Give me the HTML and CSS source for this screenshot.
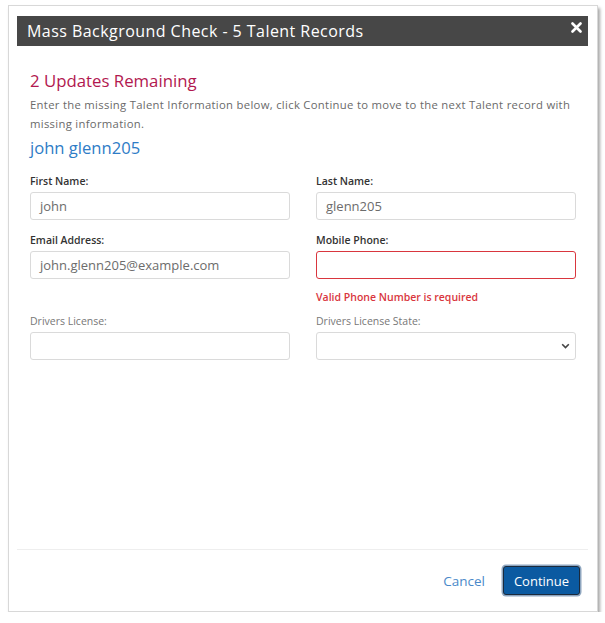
FILE: index.html
```html
<!DOCTYPE html>
<html>
<head>
<meta charset="utf-8">
<link rel="stylesheet" href="styles.css">
</head>
<body>
<div class="modal">
  <div class="header">
    <span class="header-title">Mass Background Check - 5 Talent Records</span>
    <svg class="close" width="11" height="11" viewBox="0 0 11 11"><path d="M1.5 1.5 L9.5 9.5 M9.5 1.5 L1.5 9.5" stroke="#fff" stroke-width="2.6" stroke-linecap="round"/></svg>
  </div>
  <div class="content">
    <h2 class="remaining">2 Updates Remaining</h2>
    <p class="intro">Enter the missing Talent Information below, click Continue to move to the next Talent record with missing information.</p>
    <h3 class="talent-name">john glenn205</h3>
    <div class="form-grid">
      <div class="field">
        <label class="label strong">First Name:</label>
        <div class="input">john</div>
      </div>
      <div class="field">
        <label class="label strong">Last Name:</label>
        <div class="input">glenn205</div>
      </div>
      <div class="field">
        <label class="label strong">Email Address:</label>
        <div class="input">john.glenn205@example.com</div>
      </div>
      <div class="field">
        <label class="label strong">Mobile Phone:</label>
        <div class="input invalid"></div>
        <div class="error">Valid Phone Number is required</div>
      </div>
      <div class="field">
        <label class="label">Drivers License:</label>
        <div class="input"></div>
      </div>
      <div class="field">
        <label class="label">Drivers License State:</label>
        <div class="input select">
          <svg class="chevron" width="9" height="6" viewBox="0 0 9 6"><path d="M1.2 1.2 L4.5 4.5 L7.8 1.2" fill="none" stroke="#444" stroke-width="1.6"/></svg>
        </div>
      </div>
    </div>
  </div>
  <div class="footer">
    <span class="cancel">Cancel</span>
    <span class="continue">Continue</span>
  </div>
</div>
</body>
</html>
```
FILE: styles.css
```css
html, body {
  margin: 0;
  padding: 0;
  background: #ffffff;
}
body {
  font-family: "Open Sans", "DejaVu Sans", sans-serif;
}
.modal {
  box-sizing: border-box;
  margin: 5px 0 0 8px;
  width: 590px;
  height: 607px;
  background: #fff;
  border: 1px solid #d8d8d8;
  box-shadow: 2px 3px 3px rgba(0, 0, 0, 0.35);
  padding: 10px 9px 0 8px;
  display: flex;
  flex-direction: column;
}
.header {
  height: 30px;
  background: #474747;
  color: #fff;
  display: flex;
  align-items: center;
  justify-content: space-between;
  padding: 0 10px 0 10px;
  flex: none;
}
.header-title {
  font-size: 16px;
  letter-spacing: 0.45px;
}
.close {
  margin-top: -8px;
  margin-right: -4px;
}
.content {
  flex: 1;
  padding: 0 12px 0 13px;
}
.remaining {
  margin: 25px 0 0 0;
  font-size: 16.8px;
  font-weight: 500;
  line-height: 20px;
  color: #b2184f;
}
.intro {
  margin: 4px 0 0 0;
  font-size: 11.3px;
  letter-spacing: 0.3px;
  line-height: 19px;
  color: #6a6a6a;
}
.talent-name {
  margin: 5px 0 0 0;
  font-size: 16.6px;
  font-weight: 400;
  line-height: 20px;
  color: #2e7cc6;
}
.form-grid {
  margin-top: 16px;
  display: grid;
  grid-template-columns: 260px 260px;
  column-gap: 26px;
  row-gap: 13px;
}
.field {
  display: flex;
  flex-direction: column;
}
.label {
  font-size: 10.5px;
  line-height: 14px;
  color: #777;
  margin-bottom: 4px;
}
.label.strong {
  color: #333;
  font-weight: 600;
}
.input {
  box-sizing: border-box;
  height: 28px;
  border: 1px solid #dadada;
  border-radius: 3px;
  padding: 0 9px;
  font-size: 13px;
  line-height: 26px;
  color: #6c6c6c;
  display: flex;
  align-items: center;
}
.input.invalid {
  border: 1.5px solid #d9363e;
}
.input.select {
  justify-content: flex-end;
  padding-right: 5px;
}
.error {
  margin-top: 11px;
  margin-bottom: -3px;
  font-size: 10.5px;
  line-height: 14px;
  font-weight: 600;
  color: #d9363e;
}
.footer {
  flex: none;
  height: 61px;
  border-top: 1px solid #eeeeee;
  display: flex;
  align-items: center;
  justify-content: flex-end;
  padding: 0 8px 0 0;
  gap: 18px;
}
.cancel {
  font-size: 13.5px;
  color: #4a89c9;
}
.continue {
  box-sizing: border-box;
  height: 29px;
  width: 77px;
  background: #0b5aa1;
  color: #fff;
  font-size: 13px;
  border: 1.5px solid #1b2a3c;
  border-radius: 3px;
  box-shadow: 0 0 0 1.5px #8fa6bf;
  display: flex;
  align-items: center;
  justify-content: center;
}
```
